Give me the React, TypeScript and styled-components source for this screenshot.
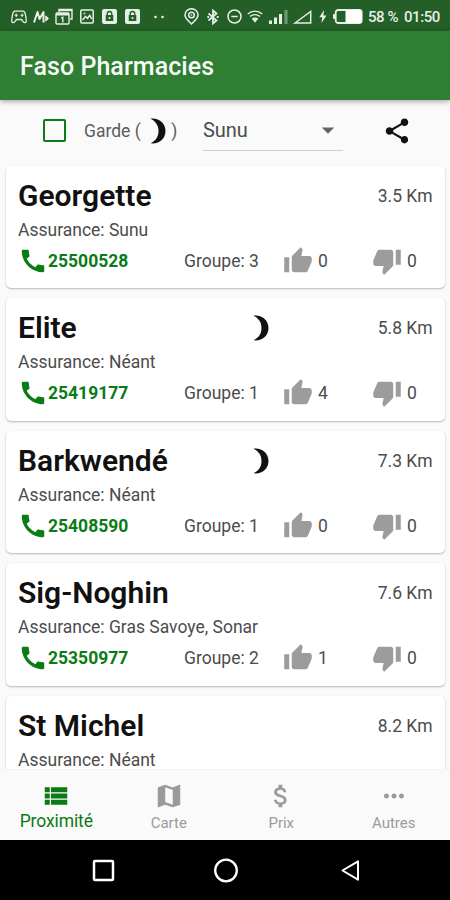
import React from 'react';
import styled, { createGlobalStyle } from 'styled-components';
import {
  MdArrowDropDown,
  MdAttachMoney,
  MdCall,
  MdMap,
  MdMoreHoriz,
  MdShare,
  MdThumbDown,
  MdThumbUp,
  MdViewList,
} from 'react-icons/md';

const green = '#0b7b17';

const GlobalStyle = createGlobalStyle`
  * { box-sizing: border-box; }
  body { margin: 0; background: #fafafa; }
`;

const Screen = styled.div`
  display: flex;
  flex-direction: column;
  width: 450px;
  height: 900px;
  overflow: hidden;
  background: #fafafa;
  color: #111;
  font-family: Roboto, sans-serif;
`;

const StatusBar = styled.div`
  display: flex;
  align-items: center;
  flex: none;
  height: 31px;
  padding-top: 2px;
  background: #235f26;
  color: #e6efe6;
`;

const StatusIcon = styled.svg<{ $gap: number }>`
  flex: none;
  display: block;
  margin-left: ${(p) => p.$gap}px;
`;

const StatusText = styled.span<{ $gap: number; $width: number }>`
  flex: none;
  width: ${(p) => p.$width}px;
  margin-left: ${(p) => p.$gap}px;
  font-size: 15px;
  font-weight: 500;
  line-height: 18px;
  letter-spacing: -0.45px;
  white-space: nowrap;
`;

const AppBar = styled.header`
  position: relative;
  display: flex;
  align-items: center;
  flex: none;
  height: 69px;
  padding: 2px 20px 0;
  background: #2f7e33;
  box-shadow: 0 2px 5px rgba(0, 0, 0, 0.3);
`;

const AppTitle = styled.h1`
  margin: 0;
  color: #f7fbf7;
  font-size: 25px;
  font-weight: 500;
  line-height: 30px;
  letter-spacing: 0.06px;
`;

const FilterRow = styled.div`
  display: flex;
  align-items: center;
  flex: none;
  height: 60px;
  padding: 1px 0 0 43px;
`;

const CheckBox = styled.span`
  width: 23px;
  height: 23px;
  border: 2px solid ${green};
  border-radius: 2px;
`;

const GuardLabel = styled.label`
  display: flex;
  align-items: center;
  width: 119px;
  margin-left: 18px;
  color: #5c5c5c;
  font-size: 17.5px;
  white-space: pre;

  svg { margin: 0 5.5px 0 9px; }
`;

const Select = styled.div`
  display: flex;
  align-items: center;
  justify-content: space-between;
  width: 140px;
  height: 41px;
  border-bottom: 1px solid #cfcfcf;
  color: #4c4c4c;
  font-size: 20px;
  letter-spacing: -0.1px;

  svg { margin-right: 0.5px; color: #666; }
`;

const ShareButton = styled.button`
  display: flex;
  margin: 0 0 0 38.5px;
  padding: 0;
  border: 0;
  background: none;
  color: #111;
`;

const List = styled.main`
  display: flex;
  flex-direction: column;
  flex: 1;
  gap: 10px;
  min-height: 0;
  padding: 5.5px 5px 0 6px;
  overflow: hidden;
`;

const Card = styled.article`
  flex: none;
  height: 122.5px;
  padding: 13px 12.5px 0 12px;
  border-radius: 5px;
  background: #fff;
  box-shadow: 0 1px 2px rgba(0, 0, 0, 0.27), 0 0 1px rgba(0, 0, 0, 0.06);
`;

const CardHead = styled.div`
  display: grid;
  grid-template-columns: 235px 1fr auto;
  align-items: center;
  height: 34px;

  svg { display: block; }
`;

const Name = styled.h2`
  margin: 0;
  color: #111;
  font-size: 30px;
  font-weight: 600;
  line-height: 34px;
  white-space: nowrap;
`;

const Distance = styled.span`
  font-size: 17.5px;
  color: #4c4c4c;
`;

const Insurance = styled.div`
  height: 20px;
  margin-top: 7px;
  font-size: 17.5px;
  line-height: 20px;
  color: #4c4c4c;
`;

const CardFoot = styled.div`
  display: grid;
  grid-template-columns: 166px 99px 89px 1fr;
  align-items: center;
  height: 30px;
  margin-top: 6px;
  font-size: 17.5px;
  color: #4c4c4c;
`;

const Phone = styled.a`
  display: flex;
  align-items: center;
  color: ${green};
  font-weight: 700;
`;

const Vote = styled.span`
  display: flex;
  align-items: center;
  gap: 5px;

  svg { color: #9c9c9c; }
`;

const TabBar = styled.nav`
  display: grid;
  grid-template-columns: repeat(4, 1fr);
  flex: none;
  height: 71px;
  border-top: 1px solid #f3f3f3;
  background: #fafafa;
`;

const Tab = styled.div<{ $active?: boolean }>`
  display: flex;
  flex-direction: column;
  align-items: center;
  padding-top: 10.5px;
  color: ${(p) => (p.$active ? green : '#9a9a9a')};
  font-size: ${(p) => (p.$active ? 17.5 : 15)}px;
  line-height: 22px;
  letter-spacing: ${(p) => (p.$active ? -0.1 : 0)}px;

  span { margin-top: ${(p) => (p.$active ? -0.5 : 1)}px; }
`;

const SystemBar = styled.footer`
  display: flex;
  align-items: center;
  flex: none;
  height: 60px;
  padding: 1px 0 0 91.5px;
  gap: 99px;
  background: #000;
`;

const Moon = () => (
  <svg width="16" height="26" viewBox="0 0 16 26">
    <path d="M.5 .7C8.500-.5 15.500 5 15.500 13S8.500 26.500 .5 25.300C6 22.500 8.500 18.500 8.500 13S6 3.500 .5 .7z" fill="#111" />
  </svg>
);

const LockIcon = ({ gap }: { gap: number }) => (
  <StatusIcon $gap={gap} width="15" height="15" viewBox="0 0 15 15">
    <rect width="15" height="15" rx="2" fill="currentColor" />
    <path d="M5.200 6V4.800a2.300 2.300 0 0 1 4.600 0V6" fill="none" stroke="#235f26" strokeWidth="1.300" />
    <rect x="3.700" y="6" width="7.600" height="6" fill="#235f26" />
    <circle cx="7.500" cy="9" r="1.100" fill="#e6efe6" />
  </StatusIcon>
);

const StatusRow = () => (
  <StatusBar>
    <StatusIcon $gap={11} width="16" height="14" viewBox="0 0 16 14" fill="none" stroke="currentColor" strokeWidth="1.300">
      <path d="M4 1.200h8c1.600 0 2.100 1.600 2.500 3.800.5 2.700 1 5.200.7 6.500-.4 1.600-2 1.500-2.900.3L10.500 9.500h-5l-1.800 2.300c-.9 1.200-2.500 1.300-2.900-.3C.5 10.200 1 7.700 1.500 5 1.900 2.800 2.400 1.200 4 1.200z" />
      <path d="M3.500 5.300h3.400M5.200 3.600v3.400M9.500 5.300h3.200M11.100 3.600v3.400" strokeWidth="1.100" />
    </StatusIcon>
    <StatusIcon $gap={6} width="17" height="14" viewBox="0 0 17 14" fill="none" stroke="currentColor" strokeWidth="2" strokeLinejoin="round">
      <path d="M1 12.500L4.500 2l2 7L10.500 2v10.500" />
      <path d="M12.800 5.800l2.700 2.700-2.700 2.700z" fill="currentColor" strokeWidth="1" />
    </StatusIcon>
    <StatusIcon $gap={5} width="18" height="17" viewBox="0 0 18 17" fill="none" stroke="currentColor" strokeWidth="1.400">
      <path d="M4 4V1.500h13V11h-2" />
      <path d="M4 2.200h13" strokeWidth="2" />
      <rect x="1" y="5" width="13" height="11" rx="1" />
      <path d="M1 6.300h13" strokeWidth="2.400" />
      <path d="M6.200 10.200l1.600-.8v5" />
    </StatusIcon>
    <StatusIcon $gap={7} width="14" height="15" viewBox="0 0 14 15" fill="none" stroke="currentColor" strokeWidth="1.500">
      <rect x=".8" y="1" width="12.400" height="13" rx="1" />
      <path d="M2.500 11l3-3.500 2 1.800 2.200-3 2 3.700" />
      <circle cx="4.500" cy="4.500" r=".7" strokeWidth=".8" />
    </StatusIcon>
    <LockIcon gap={8} />
    <LockIcon gap={8} />
    <StatusIcon $gap={14} width="10" height="4" viewBox="0 0 10 4" fill="currentColor">
      <circle cx="1.500" cy="2" r="1.300" />
      <circle cx="8.500" cy="2" r="1.300" />
    </StatusIcon>
    <StatusIcon $gap={20} width="15" height="17" viewBox="0 0 15 17" fill="none" stroke="currentColor" strokeWidth="1.500">
      <path d="M7.500 16C4 12.500 1 10.300 1 7a6.500 6.300 0 0 1 13 0c0 3.300-3 5.500-6.500 9z" />
      <circle cx="7.500" cy="7" r="2.800" />
      <circle cx="7.500" cy="7" r=".8" fill="currentColor" stroke="none" />
    </StatusIcon>
    <StatusIcon $gap={8} width="12" height="16" viewBox="0 0 12 16" fill="none" stroke="currentColor" strokeWidth="1.800">
      <path d="M1.500 4.500l8 7L6 14.500v-13l3.500 3-8 7" />
      <path d="M.3 8h1.800M9.800 8h1.800" />
    </StatusIcon>
    <StatusIcon $gap={8} width="15" height="15" viewBox="0 0 15 15" fill="none" stroke="currentColor" strokeWidth="1.500">
      <circle cx="7.500" cy="7.500" r="6.500" />
      <path d="M4.300 7.500h6.400" />
    </StatusIcon>
    <StatusIcon $gap={4.5} width="16" height="13" viewBox="0 0 16 13" fill="none" stroke="currentColor" strokeWidth="1.300">
      <path d="M.8 4c4-3.800 10.400-3.800 14.400 0M3 6.600c2.900-2.600 7.100-2.600 10 0" />
      <path d="M4.700 8.600c1.700-1.400 4.900-1.400 6.600 0L8 12.800z" fill="currentColor" stroke="none" />
    </StatusIcon>
    <StatusIcon $gap={6.5} width="19" height="14" viewBox="0 0 19 14" fill="currentColor">
      <rect x="0" y="10.500" width="3" height="3.500" />
      <rect x="5" y="7.500" width="3" height="6.500" />
      <rect x="10" y="4" width="3" height="10" />
      <rect x="15.500" y="0" width="3" height="14" opacity=".4" />
    </StatusIcon>
    <StatusIcon $gap={5} width="19" height="14" viewBox="0 0 19 14" fill="none" stroke="currentColor" strokeWidth="1.500">
      <path d="M2 13L17.700 1.500V13z" />
    </StatusIcon>
    <StatusIcon $gap={7} width="8" height="13" viewBox="0 0 8 13" fill="currentColor">
      <path d="M5 0L.3 7.300h2.900L2.500 13l5-7.600H4.400z" />
    </StatusIcon>
    <StatusIcon $gap={6} width="30" height="15" viewBox="0 0 30 15">
      <rect x="2.700" y="1" width="26" height="13" rx="2.500" fill="none" stroke="currentColor" strokeWidth="1.800" />
      <rect x="0" y="5" width="2.500" height="5" rx="1" fill="currentColor" />
      <rect x="12.500" y="1" width="16" height="13" rx="1.500" fill="#fff" />
    </StatusIcon>
    <StatusText $gap={5} $width={31}>58 %</StatusText>
    <StatusText $gap={5} $width={40}>01:50</StatusText>
  </StatusBar>
);

interface Pharmacy {
  name: string;
  insurance: string;
  phone: string;
  group: number;
  likes: number;
  dislikes: number;
  distance: string;
  onDuty?: boolean;
}

const pharmacies: Pharmacy[] = [
  { name: 'Georgette', insurance: 'Sunu', phone: '25500528', group: 3, likes: 0, dislikes: 0, distance: '3.5' },
  { name: 'Elite', insurance: 'Néant', phone: '25419177', group: 1, likes: 4, dislikes: 0, distance: '5.8', onDuty: true },
  { name: 'Barkwendé', insurance: 'Néant', phone: '25408590', group: 1, likes: 0, dislikes: 0, distance: '7.3', onDuty: true },
  { name: 'Sig-Noghin', insurance: 'Gras Savoye, Sonar', phone: '25350977', group: 2, likes: 1, dislikes: 0, distance: '7.6' },
  { name: 'St Michel', insurance: 'Néant', phone: '', group: 0, likes: 0, dislikes: 0, distance: '8.2' },
];

const PharmacyCard = ({ item }: { item: Pharmacy }) => (
  <Card>
    <CardHead>
      <Name>{item.name}</Name>
      <span>{item.onDuty && <Moon />}</span>
      <Distance>{item.distance} Km</Distance>
    </CardHead>
    <Insurance>Assurance: {item.insurance}</Insurance>
    {item.phone && (
      <CardFoot>
        <Phone>
          <MdCall size={30} />
          {item.phone}
        </Phone>
        <span>Groupe: {item.group}</span>
        <Vote>
          <MdThumbUp size={30} />
          {item.likes}
        </Vote>
        <Vote>
          <MdThumbDown size={30} />
          {item.dislikes}
        </Vote>
      </CardFoot>
    )}
  </Card>
);

export default function App() {
  return (
    <Screen>
      <GlobalStyle />
      <StatusRow />
      <AppBar>
        <AppTitle>Faso Pharmacies</AppTitle>
      </AppBar>
      <FilterRow>
        <CheckBox />
        <GuardLabel>
          {'Garde ('}
          <Moon />
          {')'}
        </GuardLabel>
        <Select>
          Sunu
          <MdArrowDropDown size={30} />
        </Select>
        <ShareButton aria-label="Partager">
          <MdShare size={30} />
        </ShareButton>
      </FilterRow>
      <List>
        {pharmacies.map((item) => (
          <PharmacyCard key={item.name} item={item} />
        ))}
      </List>
      <TabBar>
        <Tab $active>
          <MdViewList size={30} />
          <span>Proximité</span>
        </Tab>
        <Tab>
          <MdMap size={30} />
          <span>Carte</span>
        </Tab>
        <Tab>
          <MdAttachMoney size={30} />
          <span>Prix</span>
        </Tab>
        <Tab>
          <MdMoreHoriz size={30} />
          <span>Autres</span>
        </Tab>
      </TabBar>
      <SystemBar>
        <svg width="23" height="23" viewBox="0 0 23 23" fill="none" stroke="#fff" strokeWidth="2.500">
          <rect x="2" y="2" width="19" height="19" rx="1" />
        </svg>
        <svg width="25" height="25" viewBox="0 0 25 25" fill="none" stroke="#fff" strokeWidth="2.300">
          <circle cx="12" cy="12.500" r="10.800" />
        </svg>
        <svg width="23" height="23" viewBox="0 0 23 23" fill="none" stroke="#fff" strokeWidth="2" strokeLinejoin="round">
          <path d="M4.500 11.500L20 2.300v18.400z" />
        </svg>
      </SystemBar>
    </Screen>
  );
}
